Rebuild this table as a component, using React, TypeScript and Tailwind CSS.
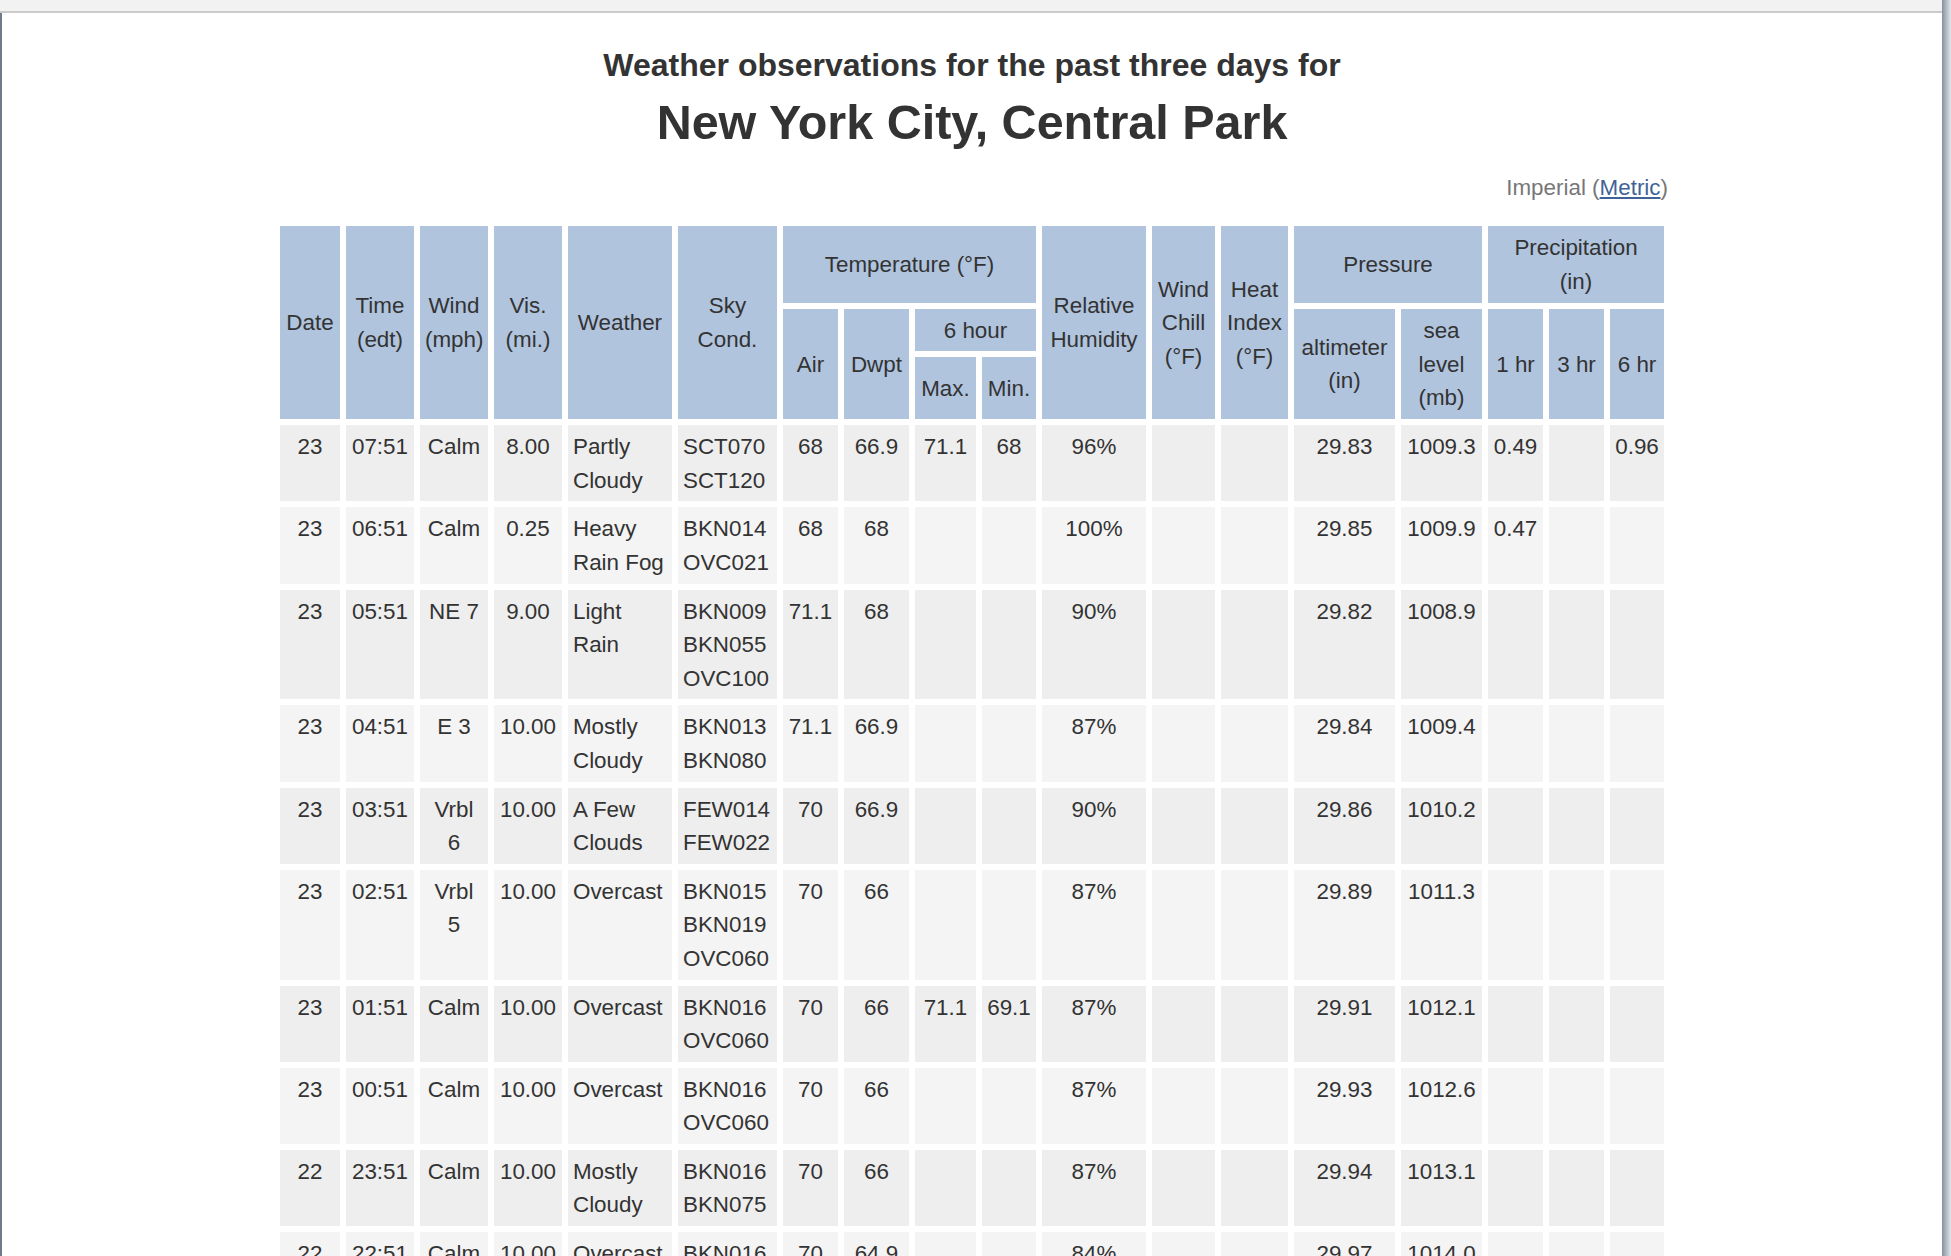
import React from "react";

const colWidths = [60, 68, 68, 68, 104, 99, 55, 65, 61, 54, 104, 63, 67, 101, 81, 55, 55, 54];

// "|" marks a line break inside a cell
const rows: string[][] = [
  ["23", "07:51", "Calm", "8.00", "Partly|Cloudy", "SCT070|SCT120", "68", "66.9", "71.1", "68", "96%", "", "", "29.83", "1009.3", "0.49", "", "0.96"],
  ["23", "06:51", "Calm", "0.25", "Heavy|Rain Fog", "BKN014|OVC021", "68", "68", "", "", "100%", "", "", "29.85", "1009.9", "0.47", "", ""],
  ["23", "05:51", "NE 7", "9.00", "Light|Rain", "BKN009|BKN055|OVC100", "71.1", "68", "", "", "90%", "", "", "29.82", "1008.9", "", "", ""],
  ["23", "04:51", "E 3", "10.00", "Mostly|Cloudy", "BKN013|BKN080", "71.1", "66.9", "", "", "87%", "", "", "29.84", "1009.4", "", "", ""],
  ["23", "03:51", "Vrbl|6", "10.00", "A Few|Clouds", "FEW014|FEW022", "70", "66.9", "", "", "90%", "", "", "29.86", "1010.2", "", "", ""],
  ["23", "02:51", "Vrbl|5", "10.00", "Overcast", "BKN015|BKN019|OVC060", "70", "66", "", "", "87%", "", "", "29.89", "1011.3", "", "", ""],
  ["23", "01:51", "Calm", "10.00", "Overcast", "BKN016|OVC060", "70", "66", "71.1", "69.1", "87%", "", "", "29.91", "1012.1", "", "", ""],
  ["23", "00:51", "Calm", "10.00", "Overcast", "BKN016|OVC060", "70", "66", "", "", "87%", "", "", "29.93", "1012.6", "", "", ""],
  ["22", "23:51", "Calm", "10.00", "Mostly|Cloudy", "BKN016|BKN075", "70", "66", "", "", "87%", "", "", "29.94", "1013.1", "", "", ""],
  ["22", "22:51", "Calm", "10.00", "Overcast", "BKN016|OVC070", "70", "64.9", "", "", "84%", "", "", "29.97", "1014.0", "", "", ""],
];

const Lines = ({ text }: { text: string }) => (
  <>
    {text.split("|").map((t, i) => (
      <React.Fragment key={i}>
        {i > 0 && <br />}
        {t}
      </React.Fragment>
    ))}
  </>
);

const Th = ({
  text,
  rowSpan,
  colSpan,
}: {
  text: string;
  rowSpan?: number;
  colSpan?: number;
}) => (
  <th
    rowSpan={rowSpan}
    colSpan={colSpan}
    className="bg-[#b0c4de] font-normal px-[5px] pt-[5px] pb-[4px] align-middle text-center whitespace-nowrap"
  >
    <Lines text={text} />
  </th>
);

const WeatherTable = () => (
  <table className="table-fixed border-separate border-spacing-[6px] w-[1396px] mx-auto text-[22.4px] leading-[33.6px]">
    <colgroup>
      {colWidths.map((w, i) => (
        <col key={i} style={{ width: w }} />
      ))}
    </colgroup>
    <thead>
      <tr className="h-[77px]">
        <Th text="Date" rowSpan={3} />
        <Th text="Time|(edt)" rowSpan={3} />
        <Th text="Wind|(mph)" rowSpan={3} />
        <Th text="Vis.|(mi.)" rowSpan={3} />
        <Th text="Weather" rowSpan={3} />
        <Th text="Sky|Cond." rowSpan={3} />
        <Th text="Temperature (°F)" colSpan={4} />
        <Th text="Relative|Humidity" rowSpan={3} />
        <Th text="Wind|Chill|(°F)" rowSpan={3} />
        <Th text="Heat|Index|(°F)" rowSpan={3} />
        <Th text="Pressure" colSpan={2} />
        <Th text="Precipitation|(in)" colSpan={3} />
      </tr>
      <tr className="h-[42px]">
        <Th text="Air" rowSpan={2} />
        <Th text="Dwpt" rowSpan={2} />
        <Th text="6 hour" colSpan={2} />
        <Th text="altimeter|(in)" rowSpan={2} />
        <Th text="sea|level|(mb)" rowSpan={2} />
        <Th text="1 hr" rowSpan={2} />
        <Th text="3 hr" rowSpan={2} />
        <Th text="6 hr" rowSpan={2} />
      </tr>
      <tr className="h-[62px]">
        <Th text="Max." />
        <Th text="Min." />
      </tr>
    </thead>
    <tbody>
      {rows.map((row, r) => (
        <tr key={r} className={r % 2 === 0 ? "bg-[#eeeeee]" : "bg-[#f4f4f4]"}>
          {row.map((cell, c) => (
            <td
              key={c}
              className={`px-[5px] pt-[5px] pb-[4px] align-top whitespace-nowrap ${
                c === 4 || c === 5 ? "text-left" : "text-center"
              }`}
            >
              <Lines text={cell} />
            </td>
          ))}
        </tr>
      ))}
    </tbody>
  </table>
);

export default function App() {
  return (
    <div className="w-[1951px] h-[1256px] overflow-hidden bg-white flex font-['Liberation_Sans',Arial,sans-serif] text-[#333333]">
      <div className="w-[1942px] flex flex-col shrink-0">
        {/* browser chrome strip */}
        <div className="h-[13px] shrink-0 bg-[#f2f2f2] border-b-2 border-[#cbcbcb]" />
        <div className="flex flex-1 min-h-0">
          <div className="w-[2px] shrink-0 bg-[#6f7b88]" />
          <main className="flex-1 min-w-0">
            <h1 className="pt-[34px] text-center text-[32px] leading-[37px] font-bold">
              Weather observations for the past three days for
            </h1>
            <h2 className="mt-[10px] text-center text-[48.5px] leading-[57px] font-bold">
              New York City, Central Park
            </h2>
            <div className="w-[1396px] mx-auto mt-[20px] pr-[2px] text-right text-[22.4px] leading-[33.6px] text-[#777777]">
              Imperial (
              <a href="#" className="text-[#3f6397] underline">
                Metric
              </a>
              )
            </div>
            <div className="mt-[15px]">
              <WeatherTable />
            </div>
          </main>
        </div>
      </div>
      <div className="w-[9px] shrink-0 bg-linear-to-r from-[#86919e] to-[#e2e7ee]" />
    </div>
  );
}
